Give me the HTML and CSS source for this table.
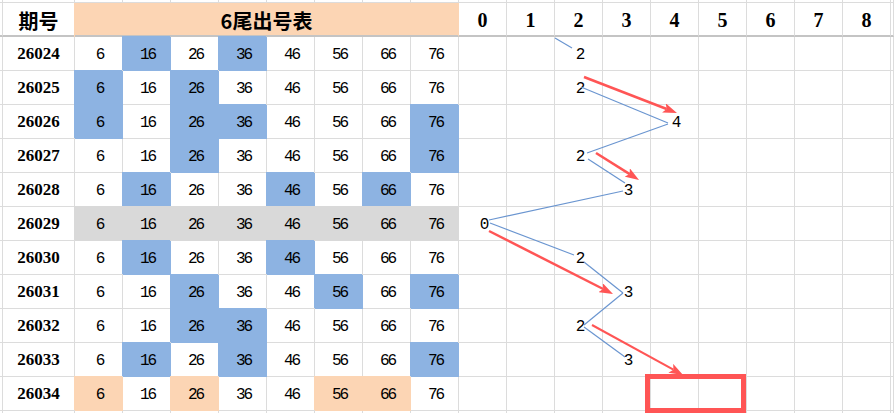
FILE: index.html
```html
<!DOCTYPE html>
<html lang="zh">
<head>
<meta charset="utf-8">
<title>6尾出号表</title>
<link rel="stylesheet" href="styles.css">
</head>
<body>
<div class="sheet">
  <div class="r top"><div class="e"></div><div class="p"></div><div class="n"></div><div class="n"></div><div class="n"></div><div class="n"></div><div class="n"></div><div class="n"></div><div class="n"></div><div class="n"></div><div class="n"></div><div class="n"></div><div class="n"></div><div class="n"></div><div class="n"></div><div class="n"></div><div class="n"></div><div class="n"></div><div class="n"></div><div class="e"></div></div>

  <div class="r hd"><div class="e"></div><div class="p th">期号</div><div class="title">6尾出号表</div><div class="n hn">0</div><div class="n hn">1</div><div class="n hn">2</div><div class="n hn">3</div><div class="n hn">4</div><div class="n hn">5</div><div class="n hn">6</div><div class="n hn">7</div><div class="n hn">8</div><div class="e"></div></div>

  <div class="r d"><div class="e"></div><div class="p">26024</div><div class="n">6</div><div class="n b">16</div><div class="n">26</div><div class="n b">36</div><div class="n">46</div><div class="n">56</div><div class="n">66</div><div class="n">76</div><div class="n"></div><div class="n"></div><div class="n v">2</div><div class="n"></div><div class="n"></div><div class="n"></div><div class="n"></div><div class="n"></div><div class="n"></div><div class="e"></div></div>

  <div class="r d"><div class="e"></div><div class="p">26025</div><div class="n b">6</div><div class="n">16</div><div class="n b">26</div><div class="n">36</div><div class="n">46</div><div class="n">56</div><div class="n">66</div><div class="n">76</div><div class="n"></div><div class="n"></div><div class="n v">2</div><div class="n"></div><div class="n"></div><div class="n"></div><div class="n"></div><div class="n"></div><div class="n"></div><div class="e"></div></div>

  <div class="r d"><div class="e"></div><div class="p">26026</div><div class="n b">6</div><div class="n">16</div><div class="n b">26</div><div class="n b">36</div><div class="n">46</div><div class="n">56</div><div class="n">66</div><div class="n b">76</div><div class="n"></div><div class="n"></div><div class="n"></div><div class="n"></div><div class="n v">4</div><div class="n"></div><div class="n"></div><div class="n"></div><div class="n"></div><div class="e"></div></div>

  <div class="r d"><div class="e"></div><div class="p">26027</div><div class="n">6</div><div class="n">16</div><div class="n b">26</div><div class="n">36</div><div class="n">46</div><div class="n">56</div><div class="n">66</div><div class="n b">76</div><div class="n"></div><div class="n"></div><div class="n v">2</div><div class="n"></div><div class="n"></div><div class="n"></div><div class="n"></div><div class="n"></div><div class="n"></div><div class="e"></div></div>

  <div class="r d"><div class="e"></div><div class="p">26028</div><div class="n">6</div><div class="n b">16</div><div class="n">26</div><div class="n">36</div><div class="n b">46</div><div class="n">56</div><div class="n b">66</div><div class="n">76</div><div class="n"></div><div class="n"></div><div class="n"></div><div class="n v">3</div><div class="n"></div><div class="n"></div><div class="n"></div><div class="n"></div><div class="n"></div><div class="e"></div></div>

  <div class="r d"><div class="e"></div><div class="p">26029</div><div class="n g">6</div><div class="n g">16</div><div class="n g">26</div><div class="n g">36</div><div class="n g">46</div><div class="n g">56</div><div class="n g">66</div><div class="n g">76</div><div class="n v">0</div><div class="n"></div><div class="n"></div><div class="n"></div><div class="n"></div><div class="n"></div><div class="n"></div><div class="n"></div><div class="n"></div><div class="e"></div></div>

  <div class="r d"><div class="e"></div><div class="p">26030</div><div class="n">6</div><div class="n b">16</div><div class="n">26</div><div class="n">36</div><div class="n b">46</div><div class="n">56</div><div class="n">66</div><div class="n">76</div><div class="n"></div><div class="n"></div><div class="n v">2</div><div class="n"></div><div class="n"></div><div class="n"></div><div class="n"></div><div class="n"></div><div class="n"></div><div class="e"></div></div>

  <div class="r d"><div class="e"></div><div class="p">26031</div><div class="n">6</div><div class="n">16</div><div class="n b">26</div><div class="n">36</div><div class="n">46</div><div class="n b">56</div><div class="n">66</div><div class="n b">76</div><div class="n"></div><div class="n"></div><div class="n"></div><div class="n v">3</div><div class="n"></div><div class="n"></div><div class="n"></div><div class="n"></div><div class="n"></div><div class="e"></div></div>

  <div class="r d"><div class="e"></div><div class="p">26032</div><div class="n">6</div><div class="n">16</div><div class="n b">26</div><div class="n b">36</div><div class="n">46</div><div class="n">56</div><div class="n">66</div><div class="n">76</div><div class="n"></div><div class="n"></div><div class="n v">2</div><div class="n"></div><div class="n"></div><div class="n"></div><div class="n"></div><div class="n"></div><div class="n"></div><div class="e"></div></div>

  <div class="r d"><div class="e"></div><div class="p">26033</div><div class="n">6</div><div class="n b">16</div><div class="n">26</div><div class="n b">36</div><div class="n">46</div><div class="n">56</div><div class="n">66</div><div class="n b">76</div><div class="n"></div><div class="n"></div><div class="n"></div><div class="n v">3</div><div class="n"></div><div class="n"></div><div class="n"></div><div class="n"></div><div class="n"></div><div class="e"></div></div>

  <div class="r d"><div class="e"></div><div class="p">26034</div><div class="n o">6</div><div class="n">16</div><div class="n o">26</div><div class="n">36</div><div class="n">46</div><div class="n o">56</div><div class="n o">66</div><div class="n">76</div><div class="n"></div><div class="n"></div><div class="n"></div><div class="n"></div><div class="n"></div><div class="n"></div><div class="n"></div><div class="n"></div><div class="n"></div><div class="e"></div></div>

  <div class="r bot"><div class="e"></div><div class="p"></div><div class="n"></div><div class="n"></div><div class="n"></div><div class="n"></div><div class="n"></div><div class="n"></div><div class="n"></div><div class="n"></div><div class="n"></div><div class="n"></div><div class="n"></div><div class="n"></div><div class="n"></div><div class="n"></div><div class="n"></div><div class="n"></div><div class="n"></div><div class="e"></div></div>

  <svg class="overlay" width="894" height="413" viewBox="0 0 894 413" aria-hidden="true">
    <defs>
      <marker id="ah" viewBox="0 0 14 10" refX="3" refY="5" markerWidth="14" markerHeight="10" markerUnits="userSpaceOnUse" orient="auto">
        <path d="M0,0 L14,5 L0,10 L3,5 z" fill="#ff5555"/>
      </marker>
    </defs>
    <g class="trend">
      <line x1="555" y1="38" x2="572" y2="48"/>
      <line x1="581" y1="87" x2="668" y2="123"/>
      <line x1="668" y1="124" x2="587" y2="153"/>
      <line x1="588" y1="159" x2="625" y2="183"/>
      <line x1="623" y1="191" x2="489" y2="220"/>
      <line x1="490" y1="223" x2="574" y2="255"/>
      <line x1="584" y1="262" x2="623" y2="293"/>
      <line x1="623" y1="293" x2="584" y2="325"/>
      <line x1="584" y1="327" x2="625" y2="357"/>
    </g>
    <g class="arrows">
      <line x1="584" y1="77" x2="666.7" y2="109" marker-end="url(#ah)"/>
      <line x1="596" y1="153" x2="629.7" y2="174.1" marker-end="url(#ah)"/>
      <line x1="489" y1="231" x2="603.2" y2="289" marker-end="url(#ah)"/>
      <line class="thin" x1="592" y1="325" x2="673.4" y2="369.7" marker-end="url(#ah)"/>
    </g>
    <rect class="mark" x="647.5" y="376.5" width="96" height="34"/>
  </svg>
</div>
</body>
</html>
```

FILE: styles.css
```css
html, body {
  margin: 0;
  padding: 0;
  background: #ffffff;
}

.sheet {
  position: relative;
  width: 894px;
  height: 413px;
  overflow: hidden;
  font-family: "Liberation Mono", "DejaVu Sans Mono", monospace;
  color: #000;
}

.r {
  display: flex;
  height: 34px;
}

.r.top,
.r.bot {
  height: 3px;
}

.r > div {
  box-sizing: border-box;
  border-right: 1px solid #dcdcdc;
  border-bottom: 1px solid #dcdcdc;
  display: flex;
  align-items: center;
  justify-content: center;
  flex: none;
}

.e { width: 3px; }
.p { width: 72px; }
.n { width: 48px; }

.r.hd > div {
  border-bottom: 2px solid #c4c4c4;
}

.r.d .p {
  font-family: "Liberation Serif", serif;
  font-weight: bold;
  font-size: 17px;
  padding-top: 1px;
}

.r.d .n {
  font-size: 16px;
  letter-spacing: -2px;
  text-indent: 2px;
  padding-top: 2px;
}

.th {
  font-family: "Noto Sans CJK SC", sans-serif;
  font-weight: bold;
  font-size: 20px;
  padding-top: 3px;
}

.title {
  width: 384px;
  background: #fcd5b4;
  border-right-color: #fcd5b4 !important;
  box-shadow: -1px 0 0 0 #fcd5b4;
  font-family: "Noto Sans CJK SC", sans-serif;
  font-weight: bold;
  font-size: 20px;
  padding-top: 3px;
}

.hn {
  font-family: "Liberation Serif", serif;
  font-weight: bold;
  font-size: 20px;
  padding-top: 3px;
}

.b {
  background: #8db3e2;
  border-color: #8db3e2 !important;
  box-shadow: -1px -1px 0 0 #8db3e2;
}

.o {
  background: #fcd5b4;
  border-color: #fcd5b4 !important;
  box-shadow: -1px -1px 0 0 #fcd5b4;
}

.g {
  background: #d9d9d9;
  border-color: #d9d9d9 !important;
  box-shadow: -1px -1px 0 0 #d9d9d9;
}

.overlay {
  position: absolute;
  left: 0;
  top: 0;
  pointer-events: none;
}

.trend line {
  stroke: #6a95d0;
  stroke-width: 1.2;
}

.arrows line {
  stroke: #ff5555;
  stroke-width: 2.5;
}

.arrows line.thin {
  stroke-width: 2;
}

.mark {
  fill: none;
  stroke: #ff5555;
  stroke-width: 5;
}
```
